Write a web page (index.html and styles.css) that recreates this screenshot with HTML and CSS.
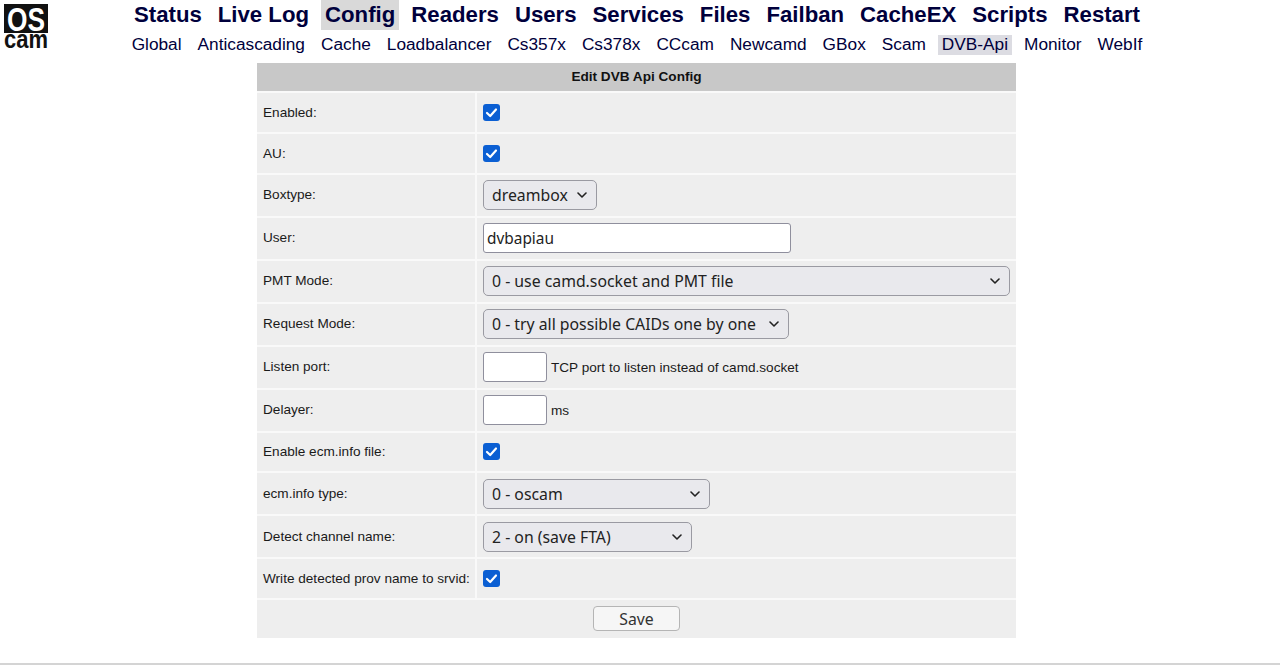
FILE: index.html
```html
<!DOCTYPE html>
<html lang="en">
<head>
<meta charset="utf-8">
<title>OSCam DVB-Api</title>
<link rel="stylesheet" href="styles.css">
</head>
<body>
<svg class="logo" width="44" height="46" viewBox="0 0 44 46" role="img" aria-label="OScam">
  <rect class="logo-box" width="44" height="29"/>
  <text class="logo-os" x="3" y="26.5" textLength="38" lengthAdjust="spacingAndGlyphs">OS</text>
  <text class="logo-cam" x="0" y="44" textLength="44" lengthAdjust="spacingAndGlyphs">cam</text>
</svg>
<nav class="nav-main">
  <a>Status</a><a>Live Log</a><a class="active">Config</a><a>Readers</a><a>Users</a><a>Services</a><a>Files</a><a>Failban</a><a>CacheEX</a><a>Scripts</a><a>Restart</a>
</nav>
<nav class="nav-sub">
  <a>Global</a><a>Anticascading</a><a>Cache</a><a>Loadbalancer</a><a>Cs357x</a><a>Cs378x</a><a>CCcam</a><a>Newcamd</a><a>GBox</a><a>Scam</a><a class="active">DVB-Api</a><a>Monitor</a><a>WebIf</a>
</nav>
<main class="config">
  <div class="title">Edit DVB Api Config</div>
  <div class="row short"><div class="label">Enabled:</div><div class="value"><input type="checkbox" checked></div></div>
  <div class="row mid"><div class="label">AU:</div><div class="value"><input type="checkbox" checked></div></div>
  <div class="row tall"><div class="label">Boxtype:</div><div class="value"><select class="w-box"><option>dreambox</option></select></div></div>
  <div class="row tall"><div class="label">User:</div><div class="value"><input class="text w-user" type="text" value="dvbapiau"></div></div>
  <div class="row tall"><div class="label">PMT Mode:</div><div class="value"><select class="w-pmt"><option>0 - use camd.socket and PMT file</option></select></div></div>
  <div class="row tall"><div class="label">Request Mode:</div><div class="value"><select class="w-req"><option>0 - try all possible CAIDs one by one</option></select></div></div>
  <div class="row tall"><div class="label">Listen port:</div><div class="value"><input class="text w-port" type="text"><span class="hint">TCP port to listen instead of camd.socket</span></div></div>
  <div class="row tall"><div class="label">Delayer:</div><div class="value"><input class="text w-port" type="text"><span class="hint">ms</span></div></div>
  <div class="row short"><div class="label">Enable ecm.info file:</div><div class="value"><input type="checkbox" checked></div></div>
  <div class="row tall"><div class="label">ecm.info type:</div><div class="value"><select class="w-ecm"><option>0 - oscam</option></select></div></div>
  <div class="row tall"><div class="label">Detect channel name:</div><div class="value"><select class="w-det"><option>2 - on (save FTA)</option></select></div></div>
  <div class="row short"><div class="label">Write detected prov name to srvid:</div><div class="value"><input type="checkbox" checked></div></div>
  <div class="save"><button type="button">Save</button></div>
</main>
<footer class="foot"></footer>
</body>
</html>
```

FILE: styles.css
```css
html, body { margin: 0; padding: 0; }
body {
  position: relative;
  height: 665px;
  overflow: hidden;
  background: #fff;
  font-family: "Liberation Sans", Arial, sans-serif;
  color: #111;
}
.logo {
  position: absolute;
  left: 4px;
  top: 4px;
  overflow: visible;
  font-family: "Liberation Sans", Arial, sans-serif;
  font-weight: 700;
}
.logo-box { fill: #111; }
.logo-os { fill: #fff; font-size: 33px; }
.logo-cam { fill: #111; font-size: 25px; }
.nav-main, .nav-sub {
  display: flex;
  justify-content: center;
  padding-right: 6px;
  color: #00003c;
}
.nav-main { height: 30px; gap: 8px; font-size: 22.2px; font-weight: 700; line-height: 29px; }
.nav-main a { padding: 0 4px; }
.nav-main a.active { background: #d9d9d9; }
.nav-sub { margin-top: 5px; height: 20px; gap: 8px; font-size: 17.25px; line-height: 19px; }
.nav-sub a { padding: 0 4px; }
.nav-sub a.active { background: #dcdce2; }
.config {
  width: 759px;
  margin: 8px 0 0 257px;
  display: flex;
  flex-direction: column;
  gap: 2px;
  background: #f9f9f9;
}
.title {
  background: #c8c8c8;
  height: 28px;
  line-height: 28px;
  text-align: center;
  font-size: 13.6px;
  font-weight: 700;
}
.row { display: flex; gap: 2px; }
.row.tall { height: 41px; }
.row.short { height: 38.5px; }
.row.mid { height: 39px; }
.label, .value { background: #eeeeee; display: flex; align-items: center; }
.label { width: 212px; padding-left: 6px; font-size: 13.6px; color: #1a1a1a; white-space: nowrap; }
.row.tall .label { padding-bottom: 1px; }
.value { flex: 1; padding-left: 6px; }
input[type="checkbox"] {
  appearance: none;
  width: 17px;
  height: 17px;
  margin: 0;
  border-radius: 3px;
  background-color: #0b5fd3;
  background-image: url("data:image/svg+xml,%3Csvg xmlns='http://www.w3.org/2000/svg' width='17' height='17' viewBox='0 0 17 17'%3E%3Cpath d='M4 9l3.2 3L13 5.5' fill='none' stroke='%23fff' stroke-width='2.2' stroke-linecap='round' stroke-linejoin='round'/%3E%3C/svg%3E");
}
select, .text, button { font-family: "Noto Sans", "Open Sans", sans-serif; font-size: 15.8px; color: #222; }
select {
  appearance: none;
  height: 30px;
  padding: 0 4px 0 8px;
  background-color: #e9e9ed;
  background-image: url("data:image/svg+xml,%3Csvg xmlns='http://www.w3.org/2000/svg' width='10' height='6' viewBox='0 0 10 6'%3E%3Cpath d='M1 1l4 4 4-4' fill='none' stroke='%23222' stroke-width='1.6' stroke-linecap='round' stroke-linejoin='round'/%3E%3C/svg%3E");
  background-repeat: no-repeat;
  background-position: right 9px center;
  border: 1px solid #9a9aa2;
  border-radius: 5px;
}
.text {
  box-sizing: border-box;
  height: 30px;
  padding: 0 3px;
  background: #fff;
  border: 1px solid #8f8f9d;
  border-radius: 3px;
  font-size: 15.4px;
}
.w-box { width: 114px; }
.w-user { width: 308px; }
.w-pmt { width: 527px; }
.w-req { width: 306px; }
.w-port { width: 64px; }
.w-ecm { width: 227px; }
.w-det { width: 209px; }
.hint { margin-left: 4px; font-size: 13.6px; color: #1a1a1a; }
.save { background: #eeeeee; height: 38.5px; display: flex; align-items: center; justify-content: center; }
button {
  width: 87px;
  height: 25px;
  padding: 0;
  background: #f6f6f6;
  border: 1px solid #b5b5b5;
  border-radius: 4px;
  color: #333;
}
.foot { position: absolute; left: 0; right: 0; top: 663px; height: 2px; background: #d4d4d4; }
```
